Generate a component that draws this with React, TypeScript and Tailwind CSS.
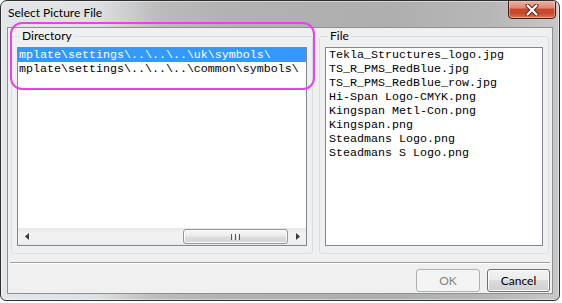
import React from "react";

const dirRows = [
  "mplate\\settings\\..\\..\\..\\uk\\symbols\\",
  "mplate\\settings\\..\\..\\..\\common\\symbols\\",
];

const fileRows = [
  "Tekla_Structures_logo.jpg",
  "TS_R_PMS_RedBlue.jpg",
  "TS_R_PMS_RedBlue_row.jpg",
  "Hi-Span Logo-CMYK.png",
  "Kingspan Metl-Con.png",
  "Kingspan.png",
  "Steadmans Logo.png",
  "Steadmans S Logo.png",
];

function CloseButton() {
  return (
    <div className="mr-[3px] -mt-px flex h-[19px] w-[48px] items-center justify-center rounded-b-[4px] border border-[#4a1d15] bg-[linear-gradient(to_bottom,#eab2a4_0%,#df8a74_40%,#c8452c_50%,#c94a30_75%,#dd7a5c_100%)] shadow-[inset_0_0_0_1px_rgba(255,210,200,0.45)]">
      <svg width="14" height="12" viewBox="0 0 14 12">
        <path d="M2.5 1.5 L11.5 10.5 M11.5 1.5 L2.5 10.5" stroke="#5a2518" strokeWidth="4" strokeLinecap="round" />
        <path d="M2.5 1.5 L11.5 10.5 M11.5 1.5 L2.5 10.5" stroke="#ffffff" strokeWidth="2.2" strokeLinecap="round" />
      </svg>
    </div>
  );
}

function Arrow({ dir }: { dir: "left" | "right" }) {
  return (
    <div className="flex h-full w-[17px] items-center justify-center">
      <svg width="4" height="7" viewBox="0 0 4 7">
        {dir === "left" ? (
          <path d="M4 0 L0 3.5 L4 7 Z" fill="#3a3a3a" />
        ) : (
          <path d="M0 0 L4 3.5 L0 7 Z" fill="#3a3a3a" />
        )}
      </svg>
    </div>
  );
}

function HScrollbar() {
  return (
    <div className="flex h-[17px] items-center bg-[linear-gradient(to_bottom,#e6e6e6_0%,#f1f1f1_25%,#f1f1f1_75%,#e8e8e8_100%)]">
      <Arrow dir="left" />
      <div className="flex h-full flex-1 items-center pl-[148px] pr-[1px]">
        <div className="flex h-[15px] flex-1 items-center justify-center rounded-[3px] border border-[#979797] bg-[linear-gradient(to_bottom,#f6f6f6_0%,#ececec_45%,#dcdcdc_55%,#d4d4d4_100%)] shadow-[inset_0_0_0_1px_#fafafa]">
          <div className="flex h-[6px] gap-[1px]">
            <div className="w-[1px] bg-[#555]" />
            <div className="w-[1px] bg-[#f8f8f8]" />
            <div className="w-[1px] bg-[#555]" />
            <div className="w-[1px] bg-[#f8f8f8]" />
            <div className="w-[1px] bg-[#555]" />
          </div>
        </div>
      </div>
      <Arrow dir="right" />
    </div>
  );
}

function GroupLabel({ text }: { text: string }) {
  return (
    <span className="absolute left-[8px] top-[-9px] bg-[#f0f0f0] px-[2px] text-[12px] leading-[15px] text-black">
      {text}
    </span>
  );
}

export default function App() {
  return (
    <div className="h-[303px] w-[562px] bg-white font-['Lato',sans-serif]">
      <div className="flex h-[301px] w-[560px] flex-col overflow-hidden rounded-t-[7px] rounded-b-[6px] border border-[#2e2e2e] bg-[linear-gradient(90deg,#e4e7e9_0%,#dee1e3_17%,#bcbcbc_28%,#b2b2b2_40%,#afafaf_70%,#b7b7b7_88%,#c8c8c8_100%)] shadow-[inset_0_0_0_1px_rgba(255,255,255,0.45)]">
        <div className="flex h-[26px] items-start justify-between">
          <span className="ml-[7px] mt-[4px] text-[12px] leading-[15px] text-black">Select Picture File</span>
          <CloseButton />
        </div>
        <div className="mx-[6px] mb-[6px] flex flex-1 flex-col border border-[#8d8f91] bg-[#f0f0f0]">
          <div className="flex gap-[6px] pl-[3px] pr-[3px] pt-[8px]">
            <div className="relative h-[218px] w-[302px] rounded-[3px] border border-[#d5dfe5] px-[5px] pt-[10px]">
              <GroupLabel text="Directory" />
              <div className="flex h-[199px] flex-col border border-[#828790] bg-white">
                <div className="flex-1 overflow-hidden font-['Liberation_Mono',monospace] text-[11.67px] leading-[14px]">
                  {dirRows.map((r, i) => (
                    <div
                      key={i}
                      className={
                        i === 0
                          ? "h-[14px] whitespace-pre bg-[#3399ff] pl-[1px] text-white"
                          : "h-[14px] whitespace-pre pl-[1px] text-black"
                      }
                    >
                      {r}
                    </div>
                  ))}
                </div>
                <HScrollbar />
              </div>
            </div>
            <div className="relative h-[218px] flex-1 rounded-[3px] border border-[#d5dfe5] px-[5px] pt-[10px]">
              <GroupLabel text="File" />
              <div className="h-[199px] overflow-hidden border border-[#828790] bg-white pl-[3px] font-['Liberation_Mono',monospace] text-[11.67px] leading-[14px] text-black">
                {fileRows.map((r) => (
                  <div key={r} className="h-[14px] whitespace-pre">
                    {r}
                  </div>
                ))}
              </div>
            </div>
          </div>
          <div className="mx-[2px] mt-[8px] border-t border-[#a0a0a0] shadow-[0_1px_0_#ffffff]" />
          <div className="flex justify-end gap-[7px] pr-[2px] pt-[6px]">
            <div className="flex h-[23px] w-[64px] items-center justify-center rounded-[3px] border border-[#adb2b5] bg-[#f4f4f4] text-[12px] text-[#838383]">
              OK
            </div>
            <div className="flex h-[23px] w-[63px] items-center justify-center rounded-[3px] border border-[#707070] bg-[linear-gradient(to_bottom,#f2f2f2_0%,#ebebeb_50%,#dddddd_50%,#cfcfcf_100%)] text-[12px] text-black shadow-[inset_0_0_0_1px_#fcfcfc]">
              Cancel
            </div>
          </div>
        </div>
      </div>
      <div className="pointer-events-none absolute left-[10px] top-[22px] h-[68px] w-[305px] rounded-[12px] border-2 border-[#e445e4]" />
    </div>
  );
}
